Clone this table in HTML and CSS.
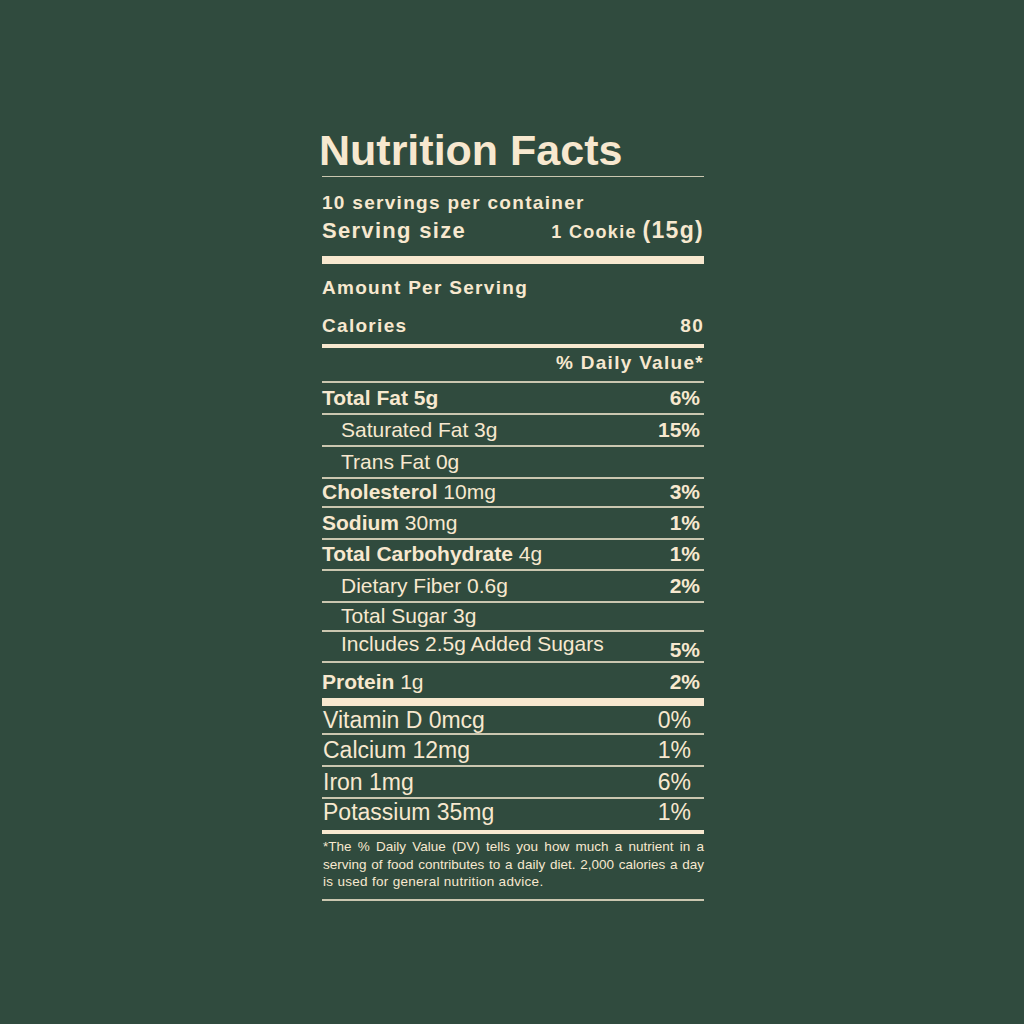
FILE: index.html
```html
<!DOCTYPE html>
<html lang="en">
<head>
<meta charset="utf-8">
<title>Nutrition Facts</title>
<link rel="stylesheet" href="styles.css">
</head>
<body>
<main class="page">
  <section class="label">
    <h1 class="title">Nutrition Facts</h1>
    <div class="servings">
      <p class="servings-count">10 servings per container</p>
      <div class="serving-size">
        <span class="ss-label">Serving size</span>
        <span class="ss-value"><span class="ss-unit">1 Cookie</span> <span class="ss-grams">(15g)</span></span>
      </div>
    </div>
    <div class="calories-block">
      <p class="amount">Amount Per Serving</p>
      <div class="calories"><span>Calories</span><span>80</span></div>
    </div>
    <div class="dv-head">% Daily Value*</div>
    <ul class="nutrients">
      <li class="row"><span class="name"><b>Total Fat 5g</b></span><span class="pct">6%</span></li>
      <li class="row indent"><span class="name">Saturated Fat 3g</span><span class="pct">15%</span></li>
      <li class="row indent"><span class="name">Trans Fat 0g</span><span class="pct"></span></li>
      <li class="row short"><span class="name"><b>Cholesterol</b> 10mg</span><span class="pct">3%</span></li>
      <li class="row"><span class="name"><b>Sodium</b> 30mg</span><span class="pct">1%</span></li>
      <li class="row mid"><span class="name"><b>Total Carbohydrate</b> 4g</span><span class="pct">1%</span></li>
      <li class="row indent"><span class="name">Dietary Fiber 0.6g</span><span class="pct">2%</span></li>
      <li class="row short indent"><span class="name">Total Sugar 3g</span><span class="pct"></span></li>
      <li class="row includes indent"><span class="name">Includes 2.5g Added Sugars</span><span class="pct">5%</span></li>
      <li class="row protein"><span class="name"><b>Protein</b> 1g</span><span class="pct">2%</span></li>
    </ul>
    <ul class="vitamins">
      <li class="vit first"><span>Vitamin D 0mcg</span><span>0%</span></li>
      <li class="vit"><span>Calcium 12mg</span><span>1%</span></li>
      <li class="vit"><span>Iron 1mg</span><span>6%</span></li>
      <li class="vit last"><span>Potassium 35mg</span><span>1%</span></li>
    </ul>
    <p class="note">
      <span class="note-line">*The % Daily Value (DV) tells you how much a nutrient in a</span>
      <span class="note-line">serving of food contributes to a daily diet. 2,000 calories a day</span>
      <span class="note-line end">is used for general nutrition advice.</span>
    </p>
  </section>
</main>
</body>
</html>
```

FILE: styles.css
```css
* {
  box-sizing: border-box;
}

html,
body {
  margin: 0;
  padding: 0;
}

body {
  background: #304b3e;
  color: #f7e8cf;
  font-family: "Liberation Sans", Arial, sans-serif;
}

.page {
  width: 1024px;
  min-height: 1024px;
  padding-top: 128px;
  padding-left: 2px;
  display: flex;
  justify-content: center;
  align-items: flex-start;
}

.label {
  width: 382px;
}

.title {
  margin: 0;
  font-size: 43px;
  line-height: 44px;
  font-weight: 700;
  text-indent: -3px;
  padding-bottom: 4px;
  border-bottom: 1px solid #cbc7b0;
}

.servings {
  padding: 15px 0 12px;
  border-bottom: 8px solid #f7e8cf;
}

.servings-count,
.amount,
.calories,
.dv-head,
.serving-size {
  font-weight: 700;
  letter-spacing: 1.3px;
}

.servings-count {
  margin: 0;
  font-size: 19px;
  line-height: 22px;
}

.serving-size {
  margin-top: 2px;
  height: 28px;
  display: flex;
  justify-content: space-between;
  align-items: baseline;
  line-height: 28px;
}

.ss-label {
  font-size: 22px;
}

.ss-unit {
  font-size: 18px;
}

.ss-grams {
  font-size: 23px;
}

.calories-block {
  padding: 13px 0 7px;
  border-bottom: 4px solid #f7e8cf;
}

.amount {
  margin: 0;
  font-size: 19px;
  line-height: 22px;
}

.calories {
  margin-top: 16px;
  display: flex;
  justify-content: space-between;
  font-size: 19px;
  line-height: 22px;
}

.dv-head {
  padding: 4px 0 7px;
  text-align: right;
  font-size: 19px;
  line-height: 22px;
  border-bottom: 2px solid #cbc7b0;
}

.nutrients,
.vitamins {
  list-style: none;
  margin: 0;
  padding: 0;
}

.row {
  display: flex;
  justify-content: space-between;
  align-items: flex-start;
  height: 32px;
  padding: 3px 4px 0 0;
  border-bottom: 2px solid #cbc7b0;
  font-size: 21px;
  line-height: 24px;
}

.row b {
  font-weight: 700;
}

.row .pct {
  font-weight: 700;
}

.row.indent .name {
  padding-left: 19px;
}

.row.short {
  height: 29px;
  padding-top: 1px;
}

.row.mid {
  height: 31px;
  padding-top: 2px;
}

.row.includes {
  height: 31px;
  padding-top: 0;
}

.row.includes .pct {
  padding-top: 6px;
}

.row.protein {
  height: 43px;
  padding-top: 7px;
  border-bottom: 8px solid #f7e8cf;
}

.vit {
  display: flex;
  justify-content: space-between;
  align-items: flex-start;
  height: 32px;
  padding: 2px 13px 0 1px;
  border-bottom: 2px solid #cbc7b0;
  font-size: 23px;
  line-height: 26px;
}

.vit.first {
  height: 29px;
  padding-top: 1px;
}

.vit.last {
  height: 35px;
  padding-top: 0;
  border-bottom: 4px solid #f7e8cf;
}

.note {
  margin: 0;
  padding: 4px 0 8px 1px;
  font-size: 13.5px;
  line-height: 17.5px;
  border-bottom: 2px solid #cbc7b0;
}

.note-line {
  display: block;
  text-align: justify;
  text-align-last: justify;
}

.note-line.end {
  text-align-last: left;
  letter-spacing: 0.3px;
}
```
